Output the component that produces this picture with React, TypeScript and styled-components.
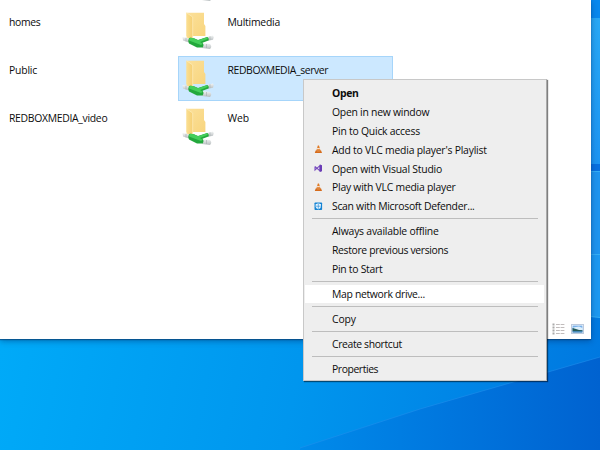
import React from "react";
import styled, { createGlobalStyle } from "styled-components";

const Global = createGlobalStyle`
  body { margin: 0; overflow: hidden; }
  * { box-sizing: border-box; }
`;

const Desktop = styled.main`
  position: relative;
  width: 600px;
  height: 450px;
  overflow: hidden;
  font: 10.4px/18px "Open Sans", "Noto Sans", sans-serif;
  color: #0c0c0c;
`;

const Wallpaper = styled.svg`
  position: absolute;
  inset: 0;
`;

const WindowShadow = styled.div`
  position: relative;
  width: 591px;
  box-shadow: 0 1px 1px rgba(10, 60, 110, 0.6), 0 2px 6px rgba(0, 40, 100, 0.45);
`;

const Explorer = styled.section`
  display: flex;
  flex-direction: column;
  justify-content: space-between;
  width: 591px;
  height: 339px;
  overflow: hidden;
  background: #fff;
`;

const Files = styled.div`
  display: grid;
  grid-template-columns: 178px 215px;
  grid-auto-rows: 48px;
  margin-top: -42px;
`;

const NameCell = styled.div`
  padding: 7px 0 0 9px;
`;

const Tile = styled.div<{ $selected?: boolean }>`
  display: flex;
  gap: 12.5px;
  height: 45px;
  margin-top: 2px;
  padding: 2px 0 0 3px;
  border: 1px solid ${(p) => (p.$selected ? "#a6d5fa" : "transparent")};
  background: ${(p) => (p.$selected ? "#cce8ff" : "transparent")};
`;

const Label = styled.span<{ $track?: number }>`
  letter-spacing: ${(p) => p.$track ?? 0}px;
  white-space: nowrap;
`;

const TileLabel = styled(Label)`
  margin-top: 2px;
`;

const StatusBar = styled.div`
  display: flex;
  justify-content: flex-end;
  gap: 6px;
  padding: 0 7px 4px 0;
`;

const Menu = styled.nav`
  position: absolute;
  left: 303px;
  top: 79px;
  width: 244px;
  height: 302px;
  padding: 3.6px 2px 0 1px;
  border: 1px solid #c8c8c8;
  border-right-color: #aaa;
  background: #eee;
  box-shadow: 1px 1px 1px rgba(0, 0, 0, 0.5);
`;

const Item = styled.div<{ $active?: boolean; $bold?: boolean }>`
  display: grid;
  grid-template-columns: 27px 1fr;
  align-items: center;
  height: 18.9px;
  background: ${(p) => (p.$active ? "#fff" : "transparent")};
  font-weight: ${(p) => (p.$bold ? 700 : 400)};
`;

const Glyph = styled.span`
  display: flex;
  padding-left: 9px;
`;

const Divider = styled.hr`
  height: 1px;
  margin: 2.5px 6px 2.5px 7px;
  border: 0;
  background: #bdbdbd;
`;

function FolderIcon() {
  return (
    <svg width="33" height="40" viewBox="0 0 33 40">
      <defs>
        <linearGradient id="flap" x1="0" x2="1">
          <stop offset="0" stopColor="#fbdf91" />
          <stop offset="1" stopColor="#f5cf74" />
        </linearGradient>
        <linearGradient id="front" x1="0" x2="1" y2="1">
          <stop offset="0" stopColor="#fbe09a" />
          <stop offset="1" stopColor="#f8d57e" />
        </linearGradient>
        <linearGradient id="plug" x1="0" x2="0" y2="1">
          <stop offset="0" stopColor="#f3f5f5" />
          <stop offset="1" stopColor="#b7bdbf" />
        </linearGradient>
      </defs>
      <path d="M4.5 1.7H22V13L23.4 15V25H4.5Z" fill="url(#front)" />
      <path d="M4.5 1.7L10.7 6V29L4.5 26.5Z" fill="url(#flap)" />
      <path d="M4.5 1.7L10.7 6V29" fill="none" stroke="#fdebb6" strokeWidth=".8" />
      <path d="M.5 26L8 27.5L7 31.5L1 29.5Z" fill="url(#plug)" />
      <path d="M25 26L31 24.5Q32.5 26 31 28.7L26 29.7Z" fill="url(#plug)" />
      <path d="M20 32L28 33Q30.5 35.5 28 38L20 37Z" fill="url(#plug)" />
      <path d="M4 26.8V30.4M28 25.3V29M24.5 33V37" stroke="#a5adaf" strokeWidth=".6" />
      <path d="M7 27Q10 26 16 29L25 26Q27.5 27 26.5 29.5L20.5 31.7Q22.5 34 20.5 36.5H15L7 32.5Q5.5 30 7 27Z" fill="#23a83c" />
      <path d="M7.5 27Q10 26.3 16 29.2L25 26.3Q26.2 27 25.5 28L18 31L20.8 32.7L19 34L7 29.5Z" fill="#45cf5b" />
    </svg>
  );
}

function VlcIcon() {
  return (
    <svg width="9" height="9" viewBox="0 0 9 9">
      <path d="M3.8 .5H5L6.6 6H2.3Z" fill="#df7a24" />
      <path d="M3.1 2.9H5.7L6.1 4.2H2.8Z" fill="#f5dfce" />
      <path d="M1.7 5.6H7.1L8 8H.8Z" fill="#d66b1b" />
      <path d="M2.8 6H6.1" stroke="#eeae77" strokeWidth=".6" />
    </svg>
  );
}

function VisualStudioIcon() {
  return (
    <svg width="9" height="9" viewBox="0 0 9 9">
      <path d="M1 2.5V6L5.9 1.7V6.8L1 2.5" fill="none" stroke="#7a4fc0" strokeWidth="1.1" />
      <path d="M5.7 .4L8 1.3V7.2L5.7 8.1Z" fill="#6a3cb5" />
    </svg>
  );
}

function DefenderIcon() {
  return (
    <svg width="9" height="9" viewBox="0 0 9 9">
      <rect x=".5" y=".5" width="7.6" height="7.6" rx=".8" fill="#1483d3" />
      <path d="M4.3 1.2L7 2.2V4.3C7 5.8 5.7 6.9 4.3 7.4C2.8 6.9 1.6 5.8 1.6 4.3V2.2Z" fill="#e8f5ff" />
      <path d="M4.3 1.4V7.2M1.8 4.2H6.8" stroke="#1483d3" strokeWidth=".6" />
    </svg>
  );
}

function DetailsIcon() {
  return (
    <svg width="13" height="12" viewBox="0 0 13 12">
      <path d="M1.5 .5V12" stroke="#aaa" strokeWidth="2" strokeDasharray="2 1" />
      <path d="M4 1.5H12.5M4 4.5H12.5M4 7.5H12.5M4 10.5H12.5" stroke="#c1bcbc" strokeDasharray="3.8 .8" />
    </svg>
  );
}

function ThumbnailIcon() {
  return (
    <svg width="13" height="12" viewBox="0 0 13 12">
      <rect x=".5" y="1.5" width="12" height="9" fill="#fff" stroke="#bdcadd" />
      <path d="M1.5 2.5H11.5V9.5H1.5Z" fill="#79b1ea" />
      <path d="M2 4.5L8 3.5L11.5 5V7H4Z" fill="#dceffc" />
      <path d="M1.5 5L5 6L8 7L11.5 7.3V8.3H1.5Z" fill="#245b58" />
      <path d="M1.5 8.3H11.5V9.5H1.5Z" fill="#397eaf" />
    </svg>
  );
}

type Entry = {
  text: string;
  track: number;
  icon?: React.ReactNode;
  bold?: boolean;
  active?: boolean;
};

const groups: Entry[][] = [
  [
    { text: "Open", track: -0.3, bold: true },
    { text: "Open in new window", track: -0.25 },
    { text: "Pin to Quick access", track: -0.23 },
    { text: "Add to VLC media player's Playlist", track: -0.22, icon: <VlcIcon /> },
    { text: "Open with Visual Studio", track: -0.22, icon: <VisualStudioIcon /> },
    { text: "Play with VLC media player", track: -0.24, icon: <VlcIcon /> },
    { text: "Scan with Microsoft Defender...", track: -0.28, icon: <DefenderIcon /> },
  ],
  [
    { text: "Always available offline", track: -0.22 },
    { text: "Restore previous versions", track: -0.35 },
    { text: "Pin to Start", track: -0.28 },
  ],
  [{ text: "Map network drive...", track: -0.32, active: true }],
  [{ text: "Copy", track: -0.1 }],
  [{ text: "Create shortcut", track: -0.36 }],
  [{ text: "Properties", track: -0.42 }],
];

const rows = [
  { left: "", leftTrack: 0, right: "", rightTrack: 0 },
  { left: "homes", leftTrack: -0.35, right: "Multimedia", rightTrack: -0.24 },
  { left: "Public", leftTrack: -0.2, right: "REDBOXMEDIA_server", rightTrack: -0.38, selected: true },
  { left: "REDBOXMEDIA_video", leftTrack: -0.3, right: "Web", rightTrack: -0.1 },
];

export default function App() {
  return (
    <Desktop>
      <Global />
      <Wallpaper width="600" height="450">
        <defs>
          <linearGradient id="sky" gradientUnits="userSpaceOnUse" x1="0" y1="350" x2="580" y2="470">
            <stop offset="0" stopColor="#00aaf8" />
            <stop offset=".5" stopColor="#0096ee" />
            <stop offset="1" stopColor="#0078e0" />
          </linearGradient>
          <linearGradient id="ray" gradientUnits="userSpaceOnUse" x1="300" y1="420" x2="600" y2="420">
            <stop offset="0" stopColor="#008bea" />
            <stop offset=".5" stopColor="#0076de" />
            <stop offset="1" stopColor="#0062d0" />
          </linearGradient>
          <linearGradient id="pane" x1="0" x2="0" y2="1">
            <stop offset="0" stopColor="#28a8f5" />
            <stop offset="1" stopColor="#1c94f2" />
          </linearGradient>
        </defs>
        <rect width="600" height="450" fill="url(#sky)" />
        <rect x="590" width="10" height="18" fill="#0788ee" />
        <rect x="590" y="18" width="10" height="146" fill="url(#pane)" />
        <rect x="590" y="164" width="10" height="7" fill="#0870e0" />
        <rect x="590" y="171" width="10" height="84" fill="#1e94ee" />
        <rect x="590" y="255" width="10" height="62" fill="#1c98f0" />
        <path d="M590 171.5H600M590 254.5H600M590 316.5L600 317.5" stroke="#35aef5" />
        <path d="M300 448L420 409L600 357V450H300Z" fill="url(#ray)" />
        <path d="M300 448L420 409L600 357" fill="none" stroke="#2390ed" opacity=".55" />
      </Wallpaper>
      <WindowShadow>
        <Explorer>
          <Files>
            {rows.map((row, i) => (
              <React.Fragment key={i}>
                <NameCell>
                  <Label $track={row.leftTrack}>{row.left}</Label>
                </NameCell>
                <Tile $selected={row.selected}>
                  <FolderIcon />
                  <TileLabel $track={row.rightTrack}>{row.right}</TileLabel>
                </Tile>
              </React.Fragment>
            ))}
          </Files>
          <StatusBar>
            <DetailsIcon />
            <ThumbnailIcon />
          </StatusBar>
        </Explorer>
      </WindowShadow>
      <Menu>
        {groups.map((group, i) => (
          <React.Fragment key={i}>
            {i > 0 && <Divider />}
            {group.map((entry) => (
              <Item key={entry.text} $active={entry.active} $bold={entry.bold}>
                <Glyph>{entry.icon}</Glyph>
                <Label $track={entry.track}>{entry.text}</Label>
              </Item>
            ))}
          </React.Fragment>
        ))}
      </Menu>
    </Desktop>
  );
}
